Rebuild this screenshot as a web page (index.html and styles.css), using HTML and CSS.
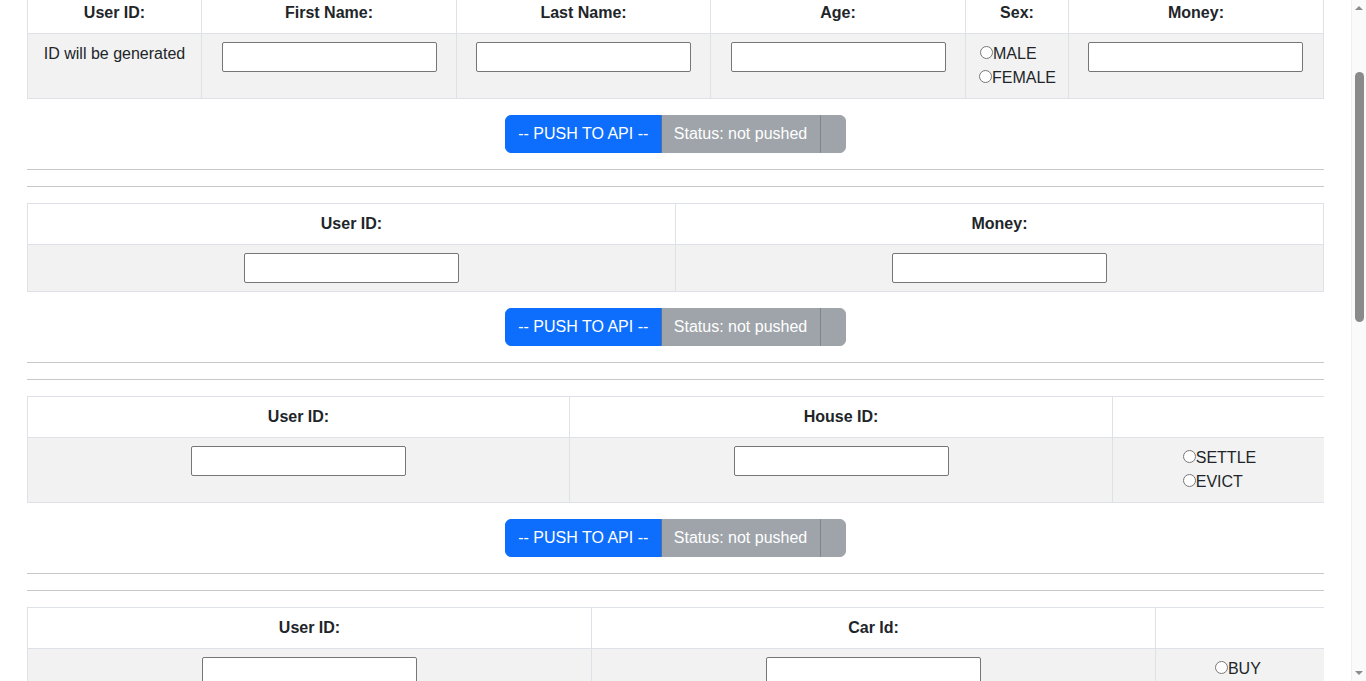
FILE: index.html
```html
<!DOCTYPE html>
<html lang="en">
<head>
<meta charset="utf-8">
<title>Users API</title>
<link rel="stylesheet" href="styles.css">
</head>
<body>
<main class="page">
  <header class="page-head">
    <h1 class="page-title">Users API</h1>
  </header>

  <section class="block">
    <table class="grid">
      <colgroup>
        <col class="w-id"><col class="w-in"><col class="w-in-b"><col class="w-in"><col class="w-sex"><col>
      </colgroup>
      <thead>
        <tr><th>User ID:</th><th>First Name:</th><th>Last Name:</th><th>Age:</th><th>Sex:</th><th>Money:</th></tr>
      </thead>
      <tbody>
        <tr>
          <td>ID will be generated</td>
          <td><input class="field" type="text"></td>
          <td><input class="field" type="text"></td>
          <td><input class="field" type="text"></td>
          <td><div class="choices"><label class="choice"><input class="radio" type="radio" name="sex">MALE</label><label class="choice"><input class="radio radio-wide" type="radio" name="sex">FEMALE</label></div></td>
          <td><input class="field" type="text"></td>
        </tr>
      </tbody>
    </table>
    <div class="actions">
      <div class="btn-group">
        <button class="btn btn-primary" type="button">-- PUSH TO API --</button>
        <button class="btn btn-secondary" type="button" disabled>Status: not pushed</button>
        <button class="btn btn-secondary" type="button" disabled></button>
      </div>
    </div>
    <hr class="rule"><hr class="rule">
  </section>

  <section class="block">
    <table class="grid">
      <colgroup><col class="w-half"><col class="w-half"></colgroup>
      <thead><tr><th>User ID:</th><th>Money:</th></tr></thead>
      <tbody><tr><td><input class="field" type="text"></td><td><input class="field" type="text"></td></tr></tbody>
    </table>
    <div class="actions">
      <div class="btn-group">
        <button class="btn btn-primary" type="button">-- PUSH TO API --</button>
        <button class="btn btn-secondary" type="button" disabled>Status: not pushed</button>
        <button class="btn btn-secondary" type="button" disabled></button>
      </div>
    </div>
    <hr class="rule"><hr class="rule">
  </section>

  <section class="block">
    <table class="grid grid-open">
      <colgroup><col class="w-house"><col class="w-house-b"><col></colgroup>
      <thead><tr><th>User ID:</th><th>House ID:</th><th></th></tr></thead>
      <tbody><tr>
        <td><input class="field" type="text"></td>
        <td><input class="field" type="text"></td>
        <td><div class="choices"><label class="choice"><input class="radio" type="radio" name="house">SETTLE</label><label class="choice"><input class="radio" type="radio" name="house">EVICT</label></div></td>
      </tr></tbody>
    </table>
    <div class="actions">
      <div class="btn-group">
        <button class="btn btn-primary" type="button">-- PUSH TO API --</button>
        <button class="btn btn-secondary" type="button" disabled>Status: not pushed</button>
        <button class="btn btn-secondary" type="button" disabled></button>
      </div>
    </div>
    <hr class="rule"><hr class="rule">
  </section>

  <section class="block">
    <table class="grid grid-open">
      <colgroup><col class="w-car"><col class="w-car"><col></colgroup>
      <thead><tr><th>User ID:</th><th>Car Id:</th><th></th></tr></thead>
      <tbody><tr>
        <td><input class="field" type="text"></td>
        <td><input class="field" type="text"></td>
        <td><div class="choices"><label class="choice"><input class="radio" type="radio" name="car">BUY</label><label class="choice"><input class="radio" type="radio" name="car">SELL</label></div></td>
      </tr></tbody>
    </table>
    <div class="actions">
      <div class="btn-group">
        <button class="btn btn-primary" type="button">-- PUSH TO API --</button>
        <button class="btn btn-secondary" type="button" disabled>Status: not pushed</button>
        <button class="btn btn-secondary" type="button" disabled></button>
      </div>
    </div>
    <hr class="rule"><hr class="rule">
  </section>

  <section class="block">
    <table class="grid">
      <colgroup><col class="w-half"><col class="w-half"></colgroup>
      <thead><tr><th>House ID:</th><th>Price:</th></tr></thead>
      <tbody><tr><td><input class="field" type="text"></td><td><input class="field" type="text"></td></tr></tbody>
    </table>
    <div class="actions">
      <div class="btn-group">
        <button class="btn btn-primary" type="button">-- PUSH TO API --</button>
        <button class="btn btn-secondary" type="button" disabled>Status: not pushed</button>
        <button class="btn btn-secondary" type="button" disabled></button>
      </div>
    </div>
    <hr class="rule"><hr class="rule">
  </section>

  <section class="block">
    <table class="grid">
      <colgroup><col class="w-half"><col class="w-half"></colgroup>
      <thead><tr><th>Car Id:</th><th>Price:</th></tr></thead>
      <tbody><tr><td><input class="field" type="text"></td><td><input class="field" type="text"></td></tr></tbody>
    </table>
    <div class="actions">
      <div class="btn-group">
        <button class="btn btn-primary" type="button">-- PUSH TO API --</button>
        <button class="btn btn-secondary" type="button" disabled>Status: not pushed</button>
        <button class="btn btn-secondary" type="button" disabled></button>
      </div>
    </div>
    <hr class="rule"><hr class="rule">
  </section>
</main>
<div class="scrollbar" aria-hidden="true">
  <span class="sb-arrow sb-up"></span>
  <span class="sb-thumb"></span>
  <span class="sb-arrow sb-down"></span>
</div>
<script src="script.js"></script>
</body>
</html>
```

FILE: styles.css
```css
*, *::before, *::after { box-sizing: border-box; }

body {
  margin: 0;
  padding: 0 15px 31px 0;
  font-family: "Liberation Sans", Arial, sans-serif;
  font-size: 16px;
  line-height: 1.5;
  color: #212529;
  background: #fff;
}

.page {
  width: 96%;
  margin: 0 auto;
}

.page-head {
  height: 144px;
  display: flex;
  align-items: center;
}

.page-title {
  margin: 0;
  font-size: 40px;
  font-weight: 500;
  line-height: 1.2;
}

.grid {
  width: 100%;
  margin-bottom: 16px;
  border-collapse: collapse;
  table-layout: fixed;
}

.grid th,
.grid td {
  padding: 8px;
  border: 1px solid #dee2e6;
  text-align: center;
  vertical-align: top;
}

.grid th { font-weight: 700; background: #fff; }
.grid td { background: #f2f2f2; }

.grid-open th:last-child,
.grid-open td:last-child { border-right: 0; }

.w-id { width: 174px; }
.w-in { width: 255px; }
.w-in-b { width: 254px; }
.w-sex { width: 103px; }
.w-half { width: 50%; }
.w-house { width: 542px; }
.w-house-b { width: 543px; }
.w-car { width: 564px; }

.field {
  display: block;
  width: 215px;
  height: 30px;
  margin: 0 auto;
  padding: 1px 2px;
  border: 1px solid #767676;
  border-radius: 2px;
  background: #fff;
  font: inherit;
  color: inherit;
}

.choices {
  display: inline-block;
  text-align: left;
}

.choice {
  display: block;
  white-space: nowrap;
}

.radio {
  width: 13px;
  height: 13px;
  margin: 3px 0 0 2px;
  vertical-align: baseline;
}

.radio-wide { margin-left: 1px; }

.actions {
  text-align: center;
}

.btn-group {
  display: inline-flex;
  vertical-align: middle;
}

.btn {
  display: inline-block;
  margin: 0;
  padding: 6px 12.25px;
  font: inherit;
  line-height: 1.5;
  color: #fff;
  border: 1px solid transparent;
  border-radius: 0;
  cursor: pointer;
}

.btn + .btn { margin-left: -1px; }

.btn:first-child { border-top-left-radius: 6px; border-bottom-left-radius: 6px; }
.btn:last-child { border-top-right-radius: 6px; border-bottom-right-radius: 6px; }

.btn-primary { background: #0d6efd; border-color: #0d6efd; }

.btn-secondary {
  background: #6c757d;
  border-color: #6c757d;
  opacity: 0.65;
  cursor: default;
}

.rule {
  margin: 16px 0;
  border: 0;
  border-top: 1px solid #212529;
  opacity: 0.25;
  color: inherit;
}

/* imitation of the window's classic scrollbar */
.scrollbar {
  position: fixed;
  top: 0;
  right: 0;
  width: 15px;
  height: 100vh;
  background: #fafafa;
  border-left: 1px solid #f0f0f0;
}

.sb-arrow {
  position: absolute;
  left: 3px;
  width: 0;
  height: 0;
  border-left: 4px solid transparent;
  border-right: 4px solid transparent;
}

.sb-up {
  top: 6px;
  border-bottom: 4px solid #8c8c8c;
}

.sb-down {
  bottom: 6px;
  border-top: 4px solid #8c8c8c;
}

.sb-thumb {
  position: absolute;
  top: 72px;
  left: 3px;
  width: 9px;
  height: 250px;
  border-radius: 5px;
  background: #8a8a8a;
}
```

FILE: script.js
```js
window.scrollTo(0, 152);
window.addEventListener('load', function () { window.scrollTo(0, 152); });
```
